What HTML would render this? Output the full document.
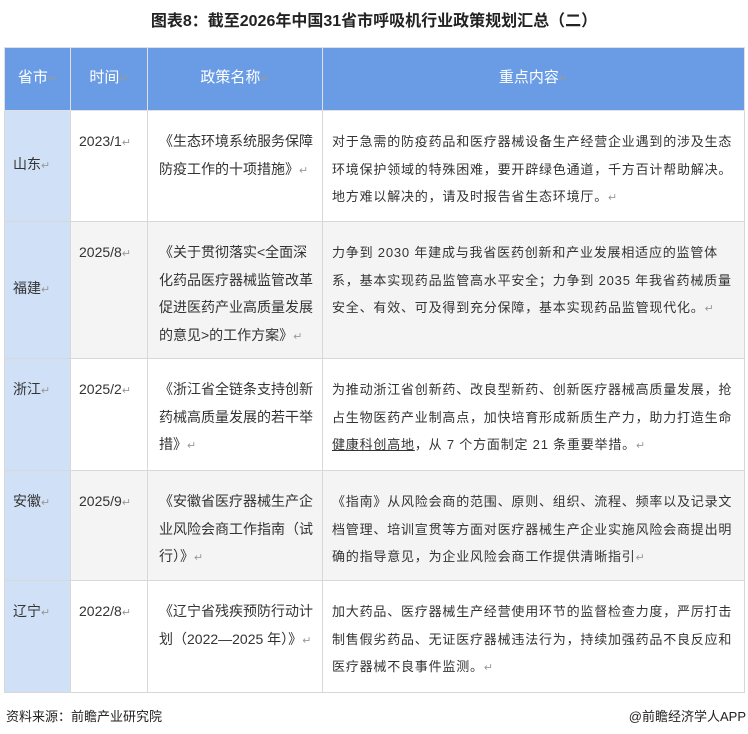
<!DOCTYPE html><html><head><meta charset="utf-8"><style>
body{margin:0;width:748px;height:734px;background:#fff;font-family:"Liberation Sans","Noto Sans CJK SC",sans-serif;color:#333;position:relative;overflow:hidden}
.t{position:absolute;top:7px;left:0;width:748px;text-align:center;font-size:16px;font-weight:bold;color:#222}
table{position:absolute;left:4px;top:47px;border-collapse:collapse;font-size:14px;line-height:27.5px;table-layout:fixed;width:740px}
td{border:1px solid #d8d8d8;vertical-align:top;padding:0 6px;word-break:break-all}
th{background:#6a9ce6;color:#fff;font-weight:normal;font-size:15px;height:62px;border:1px solid #e0e0e0;padding:0}
td.p{background:#d0e1f7;vertical-align:middle;padding:0 8px}
td.c{font-size:13px;letter-spacing:0.8px;padding-left:9px;padding-right:4px;padding-top:17px}
tr.g td{background:#f4f4f4}tr.g td.p{background:#d0e1f7}
.r{color:#999;font-size:11px;letter-spacing:0}
.f{position:absolute;top:706px;font-size:13px;color:#222}
</style></head><body>
<div class="t">图表8：截至2026年中国31省市呼吸机行业政策规划汇总（二）</div>
<table>
<colgroup><col style="width:66px"><col style="width:77px"><col style="width:175px"><col style="width:422px"></colgroup>
<tr><th>省市<span class="r">↵</span></th><th>时间<span class="r">↵</span></th><th>政策名称<span class="r">↵</span></th><th>重点内容<span class="r">↵</span></th></tr>
<tr style="height:111px"><td class="p">山东<span class="r">↵</span></td><td style="padding-top:17px;padding-left:8px">2023/1<span class="r">↵</span></td><td style="padding-top:17px;padding-left:11px">《生态环境系统服务保障防疫工作的十项措施》<span class="r">↵</span></td><td class="c">对于急需的防疫药品和医疗器械设备生产经营企业遇到的涉及生态环境保护领域的特殊困难，要开辟绿色通道，千方百计帮助解决。地方难以解决的，请及时报告省生态环境厅。<span class="r">↵</span></td></tr>
<tr class="g" style="height:137px"><td class="p">福建<span class="r">↵</span></td><td style="padding-top:17px;padding-left:8px">2025/8<span class="r">↵</span></td><td style="padding-top:17px;padding-left:11px">《关于贯彻落实&lt;全面深化药品医疗器械监管改革促进医药产业高质量发展的意见&gt;的工作方案》<span class="r">↵</span></td><td class="c">力争到 2030 年建成与我省医药创新和产业发展相适应的监管体系，基本实现药品监管高水平安全；力争到 2035 年我省药械质量安全、有效、可及得到充分保障，基本实现药品监管现代化。<span class="r">↵</span></td></tr>
<tr style="height:112px"><td class="p" style="vertical-align:top;padding-top:17px">浙江<span class="r">↵</span></td><td style="padding-top:17px;padding-left:8px">2025/2<span class="r">↵</span></td><td style="padding-top:17px;padding-left:11px">《浙江省全链条支持创新药械高质量发展的若干举措》<span class="r">↵</span></td><td class="c">为推动浙江省创新药、改良型新药、创新医疗器械高质量发展，抢占生物医药产业制高点，加快培育形成新质生产力，助力打造生命<u>健康科创高地</u>，从 7 个方面制定 21 条重要举措。<span class="r">↵</span></td></tr>
<tr class="g" style="height:110px"><td class="p" style="vertical-align:top;padding-top:17px">安徽<span class="r">↵</span></td><td style="padding-top:17px;padding-left:8px">2025/9<span class="r">↵</span></td><td style="padding-top:17px;padding-left:11px">《安徽省医疗器械生产企业风险会商工作指南（试行）》<span class="r">↵</span></td><td class="c">《指南》从风险会商的范围、原则、组织、流程、频率以及记录文档管理、培训宣贯等方面对医疗器械生产企业实施风险会商提出明确的指导意见，为企业风险会商工作提供清晰指引<span class="r">↵</span></td></tr>
<tr style="height:112px"><td class="p" style="vertical-align:top;padding-top:17px">辽宁<span class="r">↵</span></td><td style="padding-top:17px;padding-left:8px">2022/8<span class="r">↵</span></td><td style="padding-top:17px;padding-left:11px">《辽宁省残疾预防行动计划（2022—2025 年）》<span class="r">↵</span></td><td class="c">加大药品、医疗器械生产经营使用环节的监督检查力度，严厉打击制售假劣药品、无证医疗器械违法行为，持续加强药品不良反应和医疗器械不良事件监测。<span class="r">↵</span></td></tr>
</table>
<div class="f" style="left:6px">资料来源：前瞻产业研究院</div>
<div class="f" style="right:2px">@前瞻经济学人APP</div>
</body></html>
